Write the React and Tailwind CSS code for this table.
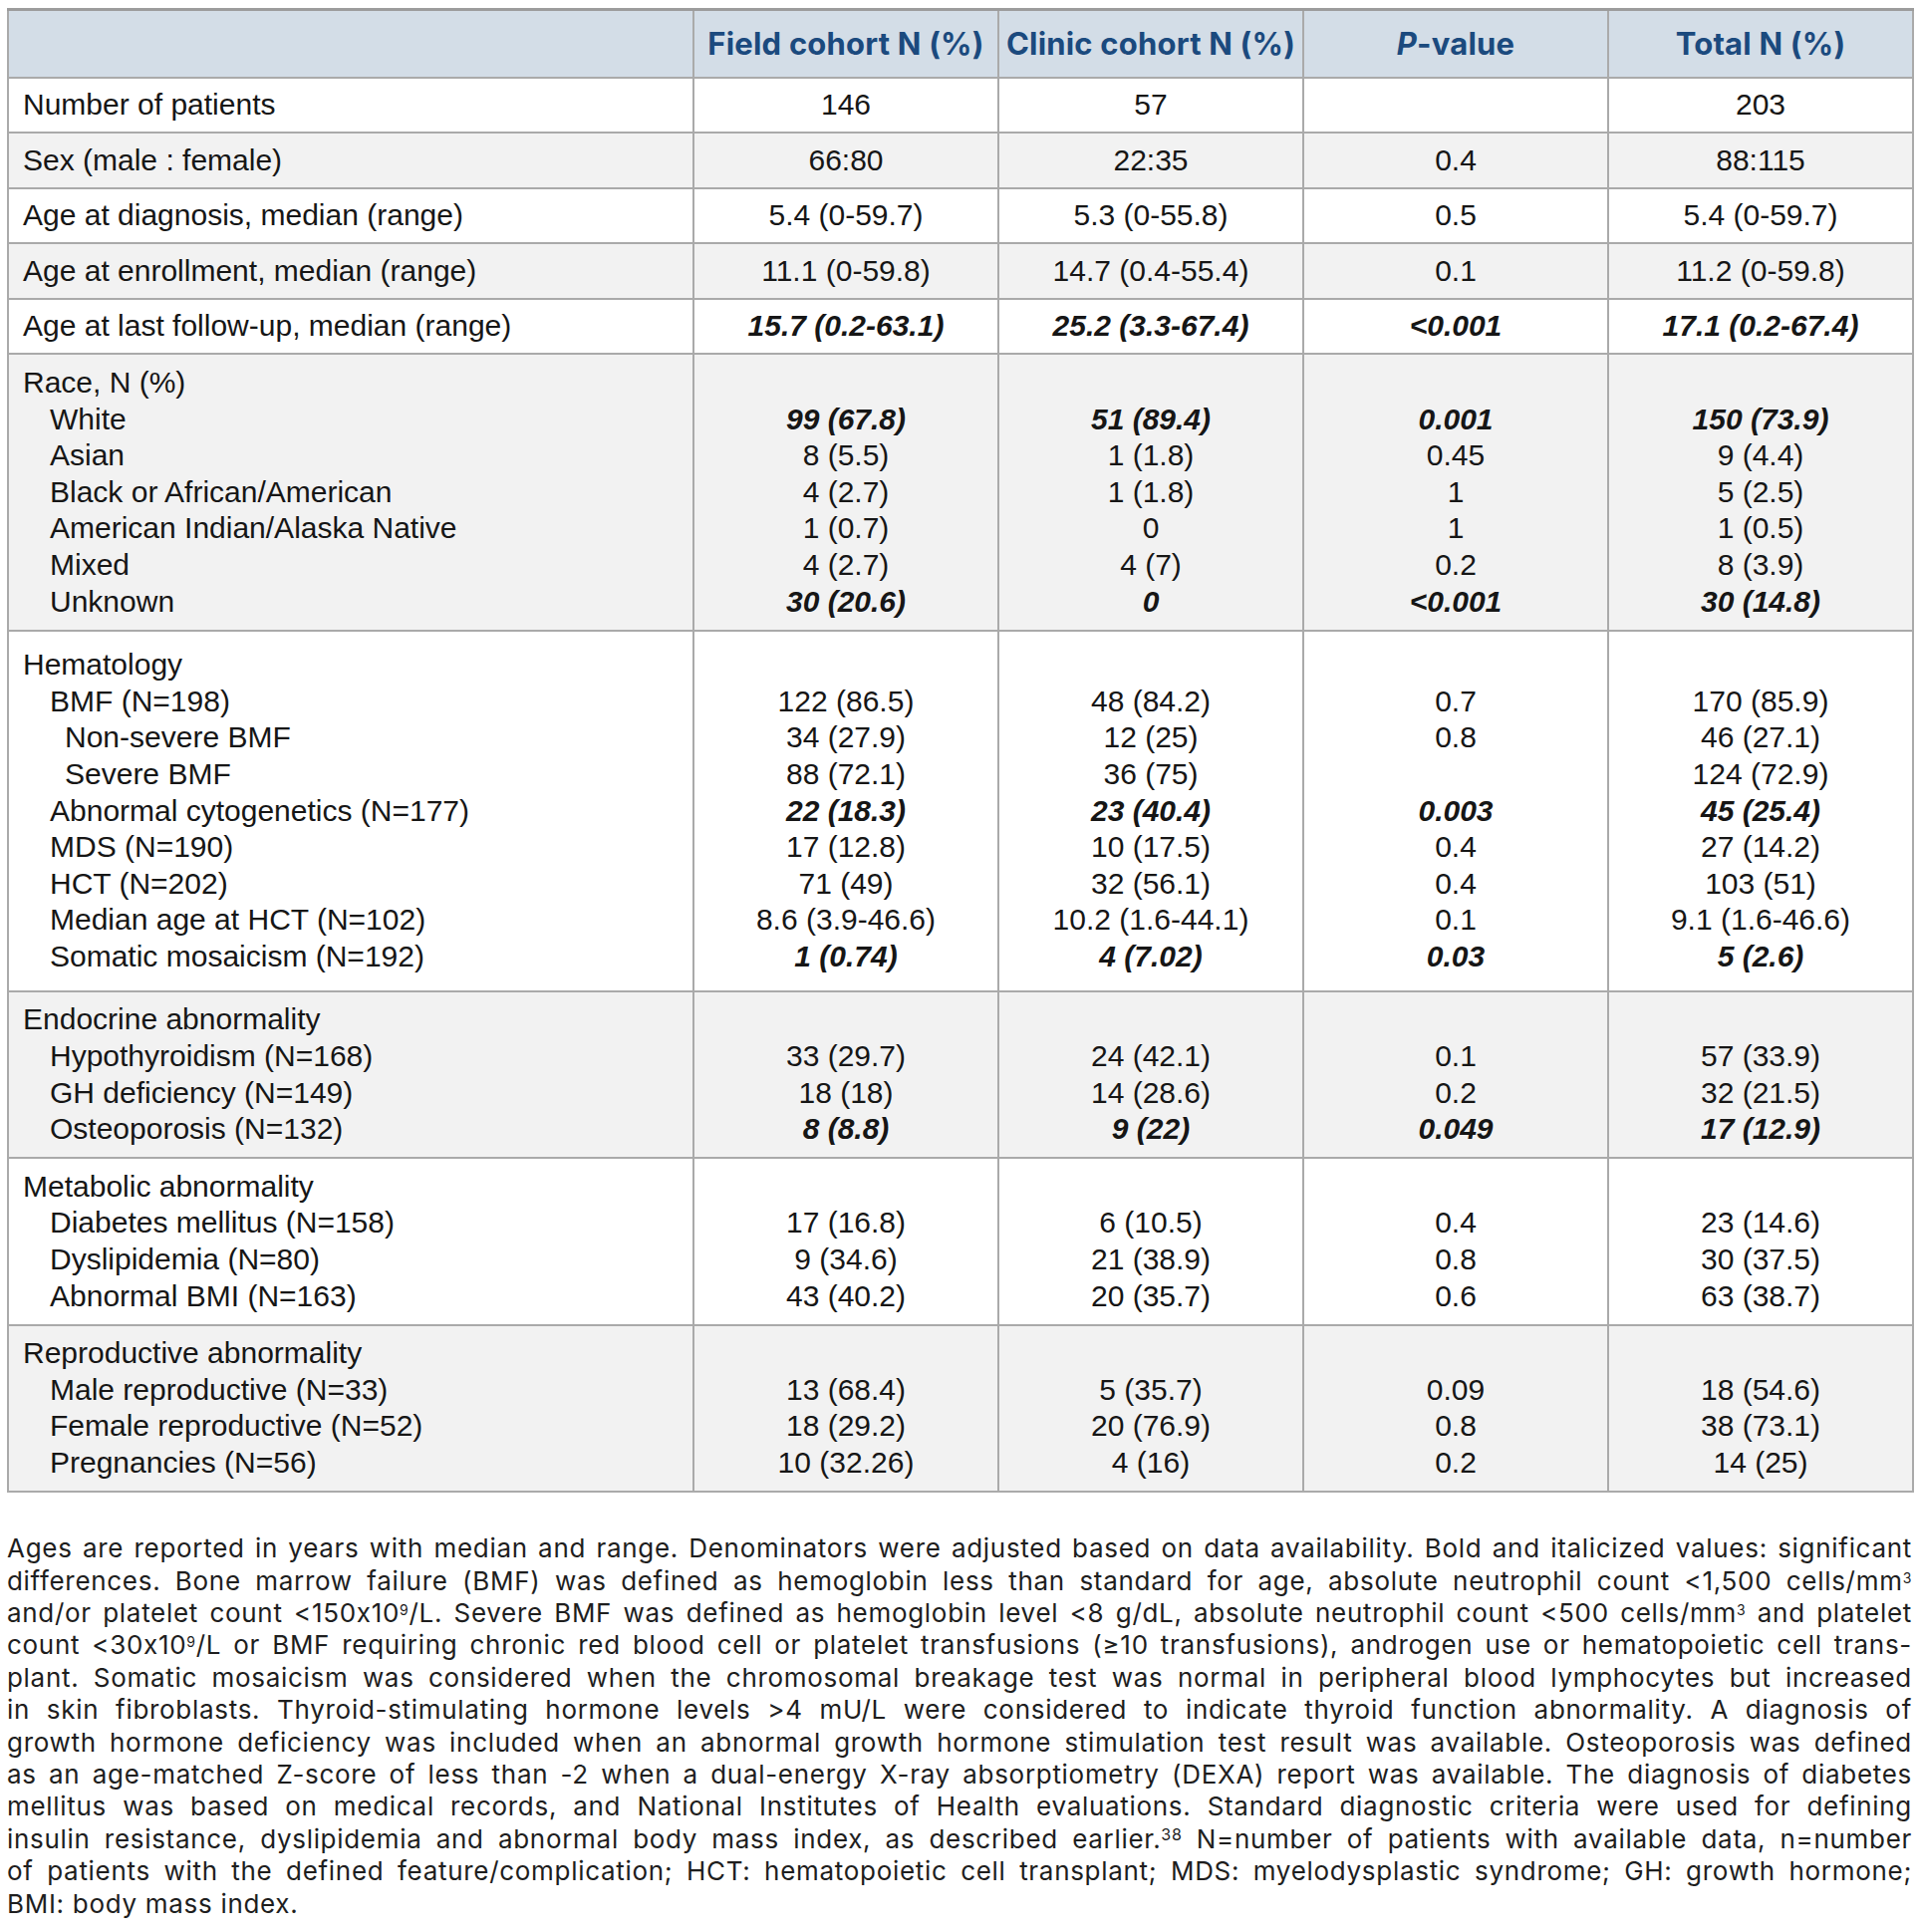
import React from "react";

// single-line rows: [label, field, clinic, p, total, significant]
const SIMPLE_ROWS = [
  ["Number of patients", "146", "57", "", "203", false],
  ["Sex (male : female)", "66:80", "22:35", "0.4", "88:115", false],
  ["Age at diagnosis, median (range)", "5.4 (0-59.7)", "5.3 (0-55.8)", "0.5", "5.4 (0-59.7)", false],
  ["Age at enrollment, median (range)", "11.1 (0-59.8)", "14.7 (0.4-55.4)", "0.1", "11.2 (0-59.8)", false],
  ["Age at last follow-up, median (range)", "15.7 (0.2-63.1)", "25.2 (3.3-67.4)", "<0.001", "17.1 (0.2-67.4)", true],
];

// grouped rows: items are [label, indent, field, clinic, p, total, significant]
const GROUPS = [
  {
    title: "Race, N (%)",
    pad: "py-[9.5px]",
    items: [
      ["White", 1, "99 (67.8)", "51 (89.4)", "0.001", "150 (73.9)", true],
      ["Asian", 1, "8 (5.5)", "1 (1.8)", "0.45", "9 (4.4)", false],
      ["Black or African/American", 1, "4 (2.7)", "1 (1.8)", "1", "5 (2.5)", false],
      ["American Indian/Alaska Native", 1, "1 (0.7)", "0", "1", "1 (0.5)", false],
      ["Mixed", 1, "4 (2.7)", "4 (7)", "0.2", "8 (3.9)", false],
      ["Unknown", 1, "30 (20.6)", "0", "<0.001", "30 (14.8)", true],
    ],
  },
  {
    title: "Hematology",
    pad: "py-[15.5px]",
    items: [
      ["BMF (N=198)", 1, "122 (86.5)", "48 (84.2)", "0.7", "170 (85.9)", false],
      ["Non-severe BMF", 2, "34 (27.9)", "12 (25)", "0.8", "46 (27.1)", false],
      ["Severe BMF", 2, "88 (72.1)", "36 (75)", "", "124 (72.9)", false],
      ["Abnormal cytogenetics (N=177)", 1, "22 (18.3)", "23 (40.4)", "0.003", "45 (25.4)", true],
      ["MDS (N=190)", 1, "17 (12.8)", "10 (17.5)", "0.4", "27 (14.2)", false],
      ["HCT (N=202)", 1, "71 (49)", "32 (56.1)", "0.4", "103 (51)", false],
      ["Median age at HCT (N=102)", 1, "8.6 (3.9-46.6)", "10.2 (1.6-44.1)", "0.1", "9.1 (1.6-46.6)", false],
      ["Somatic mosaicism (N=192)", 1, "1 (0.74)", "4 (7.02)", "0.03", "5 (2.6)", true],
    ],
  },
  {
    title: "Endocrine abnormality",
    pad: "py-[9.5px]",
    items: [
      ["Hypothyroidism (N=168)", 1, "33 (29.7)", "24 (42.1)", "0.1", "57 (33.9)", false],
      ["GH deficiency (N=149)", 1, "18 (18)", "14 (28.6)", "0.2", "32 (21.5)", false],
      ["Osteoporosis (N=132)", 1, "8 (8.8)", "9 (22)", "0.049", "17 (12.9)", true],
    ],
  },
  {
    title: "Metabolic abnormality",
    pad: "py-[9.5px]",
    items: [
      ["Diabetes mellitus (N=158)", 1, "17 (16.8)", "6 (10.5)", "0.4", "23 (14.6)", false],
      ["Dyslipidemia (N=80)", 1, "9 (34.6)", "21 (38.9)", "0.8", "30 (37.5)", false],
      ["Abnormal BMI (N=163)", 1, "43 (40.2)", "20 (35.7)", "0.6", "63 (38.7)", false],
    ],
  },
  {
    title: "Reproductive abnormality",
    pad: "py-[9.5px]",
    items: [
      ["Male reproductive (N=33)", 1, "13 (68.4)", "5 (35.7)", "0.09", "18 (54.6)", false],
      ["Female reproductive (N=52)", 1, "18 (29.2)", "20 (76.9)", "0.8", "38 (73.1)", false],
      ["Pregnancies (N=56)", 1, "10 (32.26)", "4 (16)", "0.2", "14 (25)", false],
    ],
  },
];

const cell = "border-2 border-[#aaaaaa] align-top";
const line = "h-[36.6px] leading-[36.6px] whitespace-nowrap";

function Val({ children, sig }) {
  return <div className={sig ? `${line} font-bold italic` : line}>{children || "\u00a0"}</div>;
}

function Header() {
  const th =
    "border-2 border-t-[3px] border-[#aaaaaa] border-t-[#9c9c9c] bg-[#d3dde7] h-[68px] text-center align-middle font-['Inter',sans-serif] text-[31px] font-bold text-[#1b4a7e] tracking-[0.2px]";
  return (
    <thead>
      <tr>
        <th className={th}></th>
        <th className={th}>Field cohort N (%)</th>
        <th className={th}>Clinic cohort N (%)</th>
        <th className={th}>
          <span className="italic">P</span>-value
        </th>
        <th className={th}>Total N (%)</th>
      </tr>
    </thead>
  );
}

export default function App() {
  let stripe = 0;
  return (
    <div className="w-[1926px] min-h-[1939px] bg-white px-[7px] pt-[8px] text-[#161616]">
      <table className="w-[1912px] table-fixed border-collapse font-['Liberation_Sans',Arial,sans-serif] text-[30px]">
        <colgroup>
          <col className="w-[688px]" />
          <col className="w-[306px]" />
          <col className="w-[306px]" />
          <col className="w-[306px]" />
          <col className="w-[306px]" />
        </colgroup>
        <Header />
        <tbody>
          {SIMPLE_ROWS.map(([label, a, b, p, t, sig]) => {
            const bg = stripe++ % 2 === 0 ? "bg-white" : "bg-[#f2f2f2]";
            return (
              <tr key={label} className={bg}>
                <td className={`${cell} py-[8.5px] pl-[14px]`}>
                  <div className={line}>{label}</div>
                </td>
                {[a, b, p, t].map((v, i) => (
                  <td key={i} className={`${cell} py-[8.5px] text-center`}>
                    <Val sig={sig}>{v}</Val>
                  </td>
                ))}
              </tr>
            );
          })}
          {GROUPS.map((g) => {
            const bg = stripe++ % 2 === 0 ? "bg-white" : "bg-[#f2f2f2]";
            return (
              <tr key={g.title} className={bg}>
                <td className={`${cell} ${g.pad} pl-[14px]`}>
                  <div className={line}>{g.title}</div>
                  {g.items.map(([label, indent]) => (
                    <div key={label} className={`${line} ${indent === 2 ? "pl-[42px]" : "pl-[27px]"}`}>
                      {label}
                    </div>
                  ))}
                </td>
                {[2, 3, 4, 5].map((col) => (
                  <td key={col} className={`${cell} ${g.pad} text-center`}>
                    <Val />
                    {g.items.map((it) => (
                      <Val key={it[0]} sig={it[6]}>
                        {it[col]}
                      </Val>
                    ))}
                  </td>
                ))}
              </tr>
            );
          })}
        </tbody>
      </table>

      <Footnote />
    </div>
  );
}

function Footnote() {
  const sup = "text-[14px]";
  const lines = [
    "Ages are reported in years with median and range. Denominators were adjusted based on data availability. Bold and italicized values: significant",
    <>differences. Bone marrow failure (BMF) was defined as hemoglobin less than standard for age, absolute neutrophil count &lt;1,500 cells/mm<sup className={sup}>3</sup></>,
    <>and/or platelet count &lt;150x10<sup className={sup}>9</sup>/L. Severe BMF was defined as hemoglobin level &lt;8 g/dL, absolute neutrophil count &lt;500 cells/mm<sup className={sup}>3</sup> and platelet</>,
    <>count &lt;30x10<sup className={sup}>9</sup>/L or BMF requiring chronic red blood cell or platelet transfusions (≥10 transfusions), androgen use or hematopoietic cell trans-</>,
    "plant. Somatic mosaicism was considered when the chromosomal breakage test was normal in peripheral blood lymphocytes but increased",
    "in skin fibroblasts. Thyroid-stimulating hormone levels >4 mU/L were considered to indicate thyroid function abnormality. A diagnosis of",
    "growth hormone deficiency was included when an abnormal growth hormone stimulation test result was available. Osteoporosis was defined",
    "as an age-matched Z-score of less than -2 when a dual-energy X-ray absorptiometry (DEXA) report was available. The diagnosis of diabetes",
    "mellitus was based on medical records, and National Institutes of Health evaluations. Standard diagnostic criteria were used for defining",
    <>insulin resistance, dyslipidemia and abnormal body mass index, as described earlier.<sup className="text-[16px]">38</sup> N=number of patients with available data, n=number</>,
    "of patients with the defined feature/complication; HCT: hematopoietic cell transplant; MDS: myelodysplastic syndrome; GH: growth hormone;",
  ];
  return (
    <div className="mt-[40px] w-[1912px] font-['Inter',sans-serif] text-[26px] tracking-[0.7px] leading-[32.4px] text-[#1e1e1e]">
      {lines.map((l, i) => (
        <div key={i} className="text-justify [text-align-last:justify] whitespace-nowrap">
          {l}
        </div>
      ))}
      <div>BMI: body mass index.</div>
    </div>
  );
}
